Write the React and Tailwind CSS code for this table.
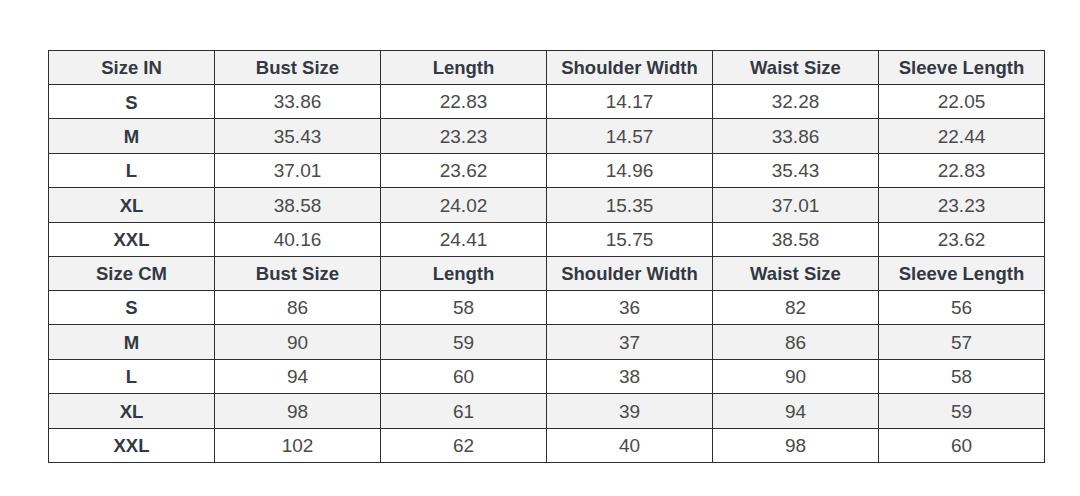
import React from 'react';

const headers = ['Bust Size', 'Length', 'Shoulder Width', 'Waist Size', 'Sleeve Length'];

const inches = [
  ['S', '33.86', '22.83', '14.17', '32.28', '22.05'],
  ['M', '35.43', '23.23', '14.57', '33.86', '22.44'],
  ['L', '37.01', '23.62', '14.96', '35.43', '22.83'],
  ['XL', '38.58', '24.02', '15.35', '37.01', '23.23'],
  ['XXL', '40.16', '24.41', '15.75', '38.58', '23.62'],
];

const cm = [
  ['S', '86', '58', '36', '82', '56'],
  ['M', '90', '59', '37', '86', '57'],
  ['L', '94', '60', '38', '90', '58'],
  ['XL', '98', '61', '39', '94', '59'],
  ['XXL', '102', '62', '40', '98', '60'],
];

const bold = "border border-[#2e2e2e] pt-[2px] text-center font-bold text-[#333943] text-[18.5px] font-['Liberation_Sans',Arial,sans-serif]";
const plain = "border border-[#2e2e2e] pt-[2px] text-center text-[#4a4a4a] text-[19px] font-['Liberation_Sans',Arial,sans-serif]";

const HeaderRow = ({ label }) => (
  <tr className="bg-[#f2f2f2]">
    {[label, ...headers].map((h) => (
      <td key={h} className={bold}>
        {h}
      </td>
    ))}
  </tr>
);

const DataRow = ({ row, shaded }) => (
  <tr className={shaded ? 'bg-[#f2f2f2]' : 'bg-white'}>
    {row.map((v, i) => (
      <td key={i} className={i === 0 ? bold : plain}>
        {v}
      </td>
    ))}
  </tr>
);

export default function App() {
  return (
    <div className="w-[1080px] h-[496px] bg-white pl-[48px] pt-[50px]">
      <table className="border-collapse table-fixed w-[995px] h-[413px]">
        <colgroup>
          {[0, 1, 2, 3, 4, 5].map((i) => (
            <col key={i} className="w-[166px]" />
          ))}
        </colgroup>
        <tbody>
          <HeaderRow label="Size IN" />
          {inches.map((r, i) => (
            <DataRow key={'in' + i} row={r} shaded={i % 2 === 1} />
          ))}
          <HeaderRow label="Size CM" />
          {cm.map((r, i) => (
            <DataRow key={'cm' + i} row={r} shaded={i % 2 === 1} />
          ))}
        </tbody>
      </table>
    </div>
  );
}
